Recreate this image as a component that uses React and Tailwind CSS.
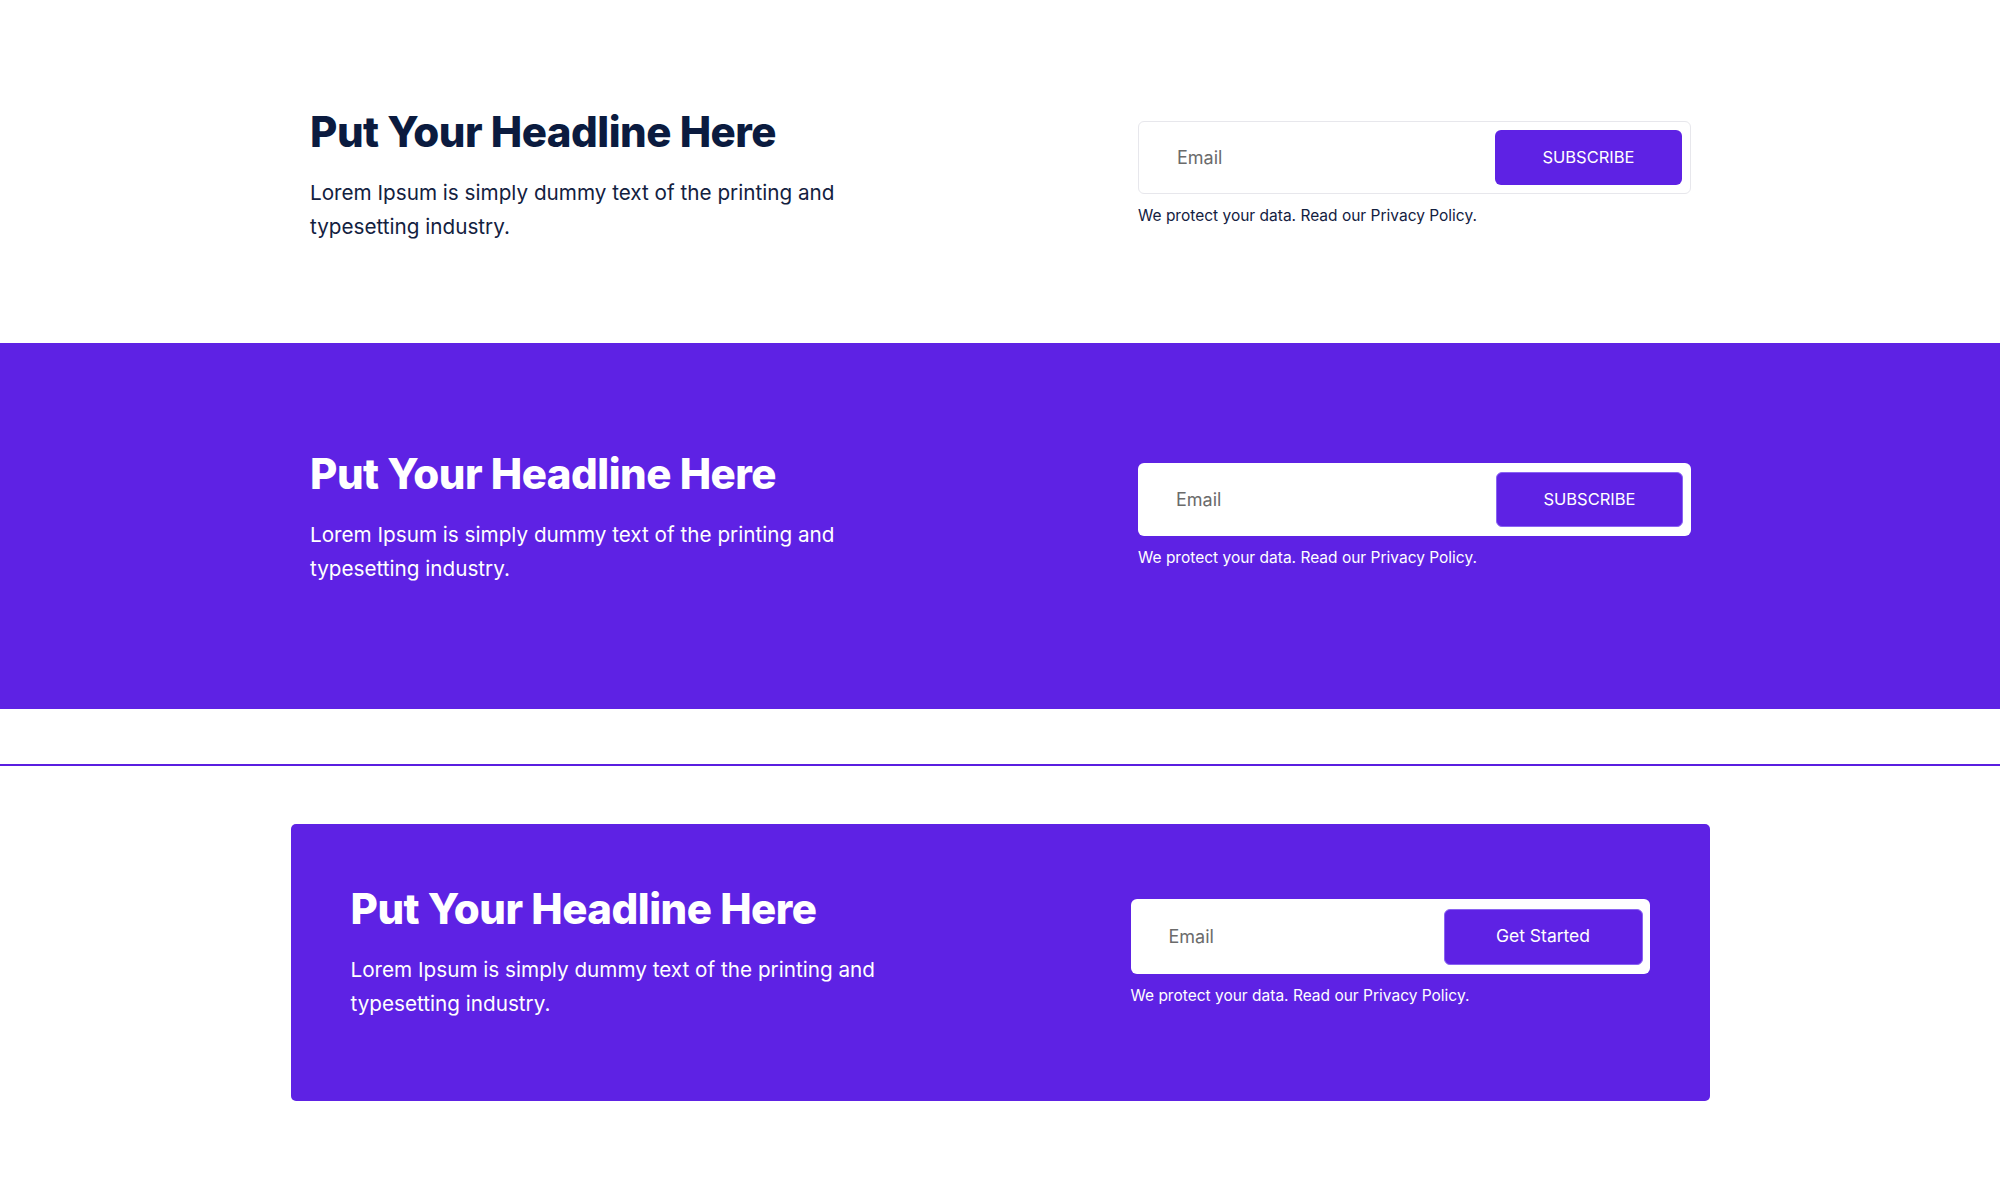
const font = { fontFamily: "Inter, 'Noto Sans', sans-serif" };

function SignupForm({ variant, label, wide }) {
  const onPurple = variant === "purple";
  return (
    <div className={"shrink-0 " + (wide ? "w-[519px]" : "w-[553px]")}>
      <div
        className={
          "flex items-center justify-between bg-white rounded-[6px] " +
          (wide ? "h-[75px] pl-[38px] pr-[7px]" : "h-[73px] pl-[38px] pr-[8px]") +
          (onPurple ? "" : " border border-[#e7e7ec]")
        }
      >
        <input
          type="email"
          placeholder="Email"
          className="min-w-0 flex-1 bg-transparent outline-none text-[18px] text-[#555] placeholder:text-[#6b6b6b]"
        />
        <button
          className={
            "shrink-0 bg-[#5e22e4] text-white rounded-[6px] " +
            (onPurple ? "border border-[#8a63f2] " : "") +
            (wide ? "w-[199px] h-[56px] text-[17.5px]" : "w-[187px] h-[55px] text-[16.5px]")
          }
        >
          {label}
        </button>
      </div>
      <p
        className={
          "mt-[12px] text-[15.5px] leading-[20px] " +
          (onPurple ? "text-white" : "text-[#13213f]")
        }
      >
        We protect your data. Read our Privacy Policy.
      </p>
    </div>
  );
}

function Copy({ dark }) {
  return (
    <div className="pt-[1px]">
      <h2
        className={
          "text-[42px] leading-[50px] font-extrabold tracking-[-0.5px] " +
          (dark ? "text-[#0b1b3f]" : "text-white")
        }
      >
        Put Your Headline Here
      </h2>
      <p
        className={
          "mt-[19px] w-[580px] text-[20.7px] leading-[34px] " +
          (dark ? "text-[#13213f]" : "text-white")
        }
      >
        Lorem Ipsum is simply dummy text of the printing and typesetting industry.
      </p>
    </div>
  );
}

export default function App() {
  return (
    <div className="min-h-[1189px] bg-white" style={font}>
      <section className="h-[343px] pt-[106px]">
        <div className="flex items-start justify-between w-[1381px] ml-[310px]">
          <Copy dark />
          <div className="pt-[15px]">
            <SignupForm variant="light" label="SUBSCRIBE" />
          </div>
        </div>
      </section>

      <section className="h-[366px] pt-[105px] bg-[#5e22e4]">
        <div className="flex items-start justify-between w-[1381px] ml-[310px]">
          <Copy />
          <div className="pt-[15px]">
            <SignupForm variant="purple" label="SUBSCRIBE" />
          </div>
        </div>
      </section>

      <div className="h-[55px]" />
      <div className="h-[2px] bg-[#5a1ee0]" />

      <div className="pt-[58px]">
        <div className="mx-auto w-[1419px] h-[277px] rounded-[5px] bg-[#5e22e4] pt-[59px] px-[60px] flex items-start justify-between">
          <Copy />
          <div className="pt-[16px]">
            <SignupForm variant="purple" label="Get Started" wide />
          </div>
        </div>
      </div>
    </div>
  );
}
